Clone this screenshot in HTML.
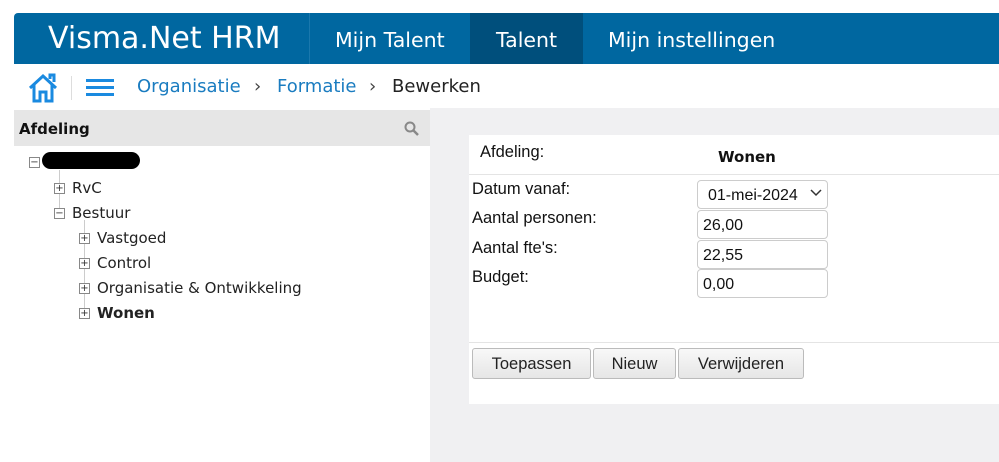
<!DOCTYPE html>
<html><head><style>
body{margin:0;width:999px;height:462px;background:#fff;font-family:"DejaVu Sans","Liberation Sans",sans-serif;position:relative;overflow:hidden}
.a{position:absolute}
.hdr{left:14px;top:13px;width:985px;height:51px;background:#0067a0;border-top-left-radius:4px}
.t{color:#fff;font-size:20.5px;top:28px}
.bc{font-size:18px;top:76px;color:#1a7cc0}
.tree{font-size:15px;color:#222}
.box{width:9px;height:9px;border:1px solid #888;background:#fff;font-size:10px;line-height:9px;text-align:center;color:#333}
.lbl{font-family:"Liberation Sans",sans-serif;font-size:16.5px;color:#111}
.inp{border:1px solid #ccc;border-radius:4px;width:131px;height:29px;background:#fff;font-family:"Liberation Sans",sans-serif;font-size:16px;line-height:29px;padding-left:5px;box-sizing:border-box;color:#111}
.btn{top:348px;height:31px;border:1px solid #bbb;border-radius:3px;background:linear-gradient(#f8f8f8,#e6e6e6);font-family:"Liberation Sans",sans-serif;font-size:16.5px;line-height:31px;text-align:center;color:#222;box-sizing:border-box}
</style></head><body>
<div class="a hdr"></div>
<div class="a" style="left:309px;top:13px;width:1px;height:51px;background:#1a78ad"></div>
<div class="a" style="left:470px;top:13px;width:113px;height:51px;background:#004f7c"></div>
<div class="a t" style="left:48px;top:21px;font-size:30px">Visma.Net HRM</div>
<div class="a t" style="left:335px">Mijn Talent</div>
<div class="a t" style="left:496px">Talent</div>
<div class="a t" style="left:608px">Mijn instellingen</div>
<svg class="a" style="left:27px;top:72px" width="34" height="32" viewBox="0 0 34 32"><path d="M3 16 L16 4 L29 16 M7 13 V29 H13 V20 H19 V29 H25 V13 M23 7 V3 H27 V10" fill="none" stroke="#1a8ae0" stroke-width="3"/></svg>
<div class="a" style="left:71px;top:76px;width:1px;height:24px;background:#ddd"></div>
<div class="a" style="left:86px;top:79px;width:28px;height:3px;background:#1a8ae0;box-shadow:0 7px 0 #1a8ae0,0 14px 0 #1a8ae0"></div>
<div class="a bc" style="left:137px">Organisatie</div>
<div class="a bc" style="left:254px;color:#444">›</div>
<div class="a bc" style="left:277px">Formatie</div>
<div class="a bc" style="left:369px;color:#444">›</div>
<div class="a bc" style="left:392px;color:#222">Bewerken</div>
<div class="a" style="left:430px;top:108px;width:569px;height:354px;background:#f0f0f2"></div>
<div class="a" style="left:14px;top:110px;width:416px;height:36px;background:#e6e6e6"></div>
<div class="a" style="left:19px;top:120px;font-weight:bold;font-size:15px;color:#111">Afdeling</div>
<svg class="a" style="left:404px;top:121px" width="16" height="16"><circle cx="6" cy="6" r="4.5" fill="none" stroke="#888" stroke-width="2"/><path d="M9.5 9.5 L14 14" stroke="#888" stroke-width="2.5"/></svg>
<div class="a box" style="left:29px;top:157px">−</div>
<div class="a" style="left:42px;top:152px;width:98px;height:17px;background:#000;border-radius:9px"></div>
<div class="a" style="left:59px;top:170px;width:1px;height:42px;background:#ccc"></div>
<div class="a" style="left:84px;top:220px;width:1px;height:92px;background:#ccc"></div>
<div class="a box" style="left:54px;top:183px">+</div><div class="a tree" style="left:72px;top:179px">RvC</div>
<div class="a box" style="left:54px;top:208px">−</div><div class="a tree" style="left:72px;top:204px">Bestuur</div>
<div class="a box" style="left:79px;top:233px">+</div><div class="a tree" style="left:97px;top:229px">Vastgoed</div>
<div class="a box" style="left:79px;top:258px">+</div><div class="a tree" style="left:97px;top:254px">Control</div>
<div class="a box" style="left:79px;top:283px">+</div><div class="a tree" style="left:97px;top:279px">Organisatie &amp; Ontwikkeling</div>
<div class="a box" style="left:79px;top:308px">+</div><div class="a tree" style="left:97px;top:304px;font-weight:bold">Wonen</div>
<div class="a" style="left:469px;top:135px;width:530px;height:269px;background:#fff"></div>
<div class="a" style="left:469px;top:174px;width:530px;height:1px;background:#e4e4e4"></div>
<div class="a" style="left:469px;top:342px;width:530px;height:1px;background:#e4e4e4"></div>
<div class="a lbl" style="left:480px;top:143px">Afdeling:</div>
<div class="a" style="left:718px;top:148px;font-weight:bold;font-size:15px;color:#111">Wonen</div>
<div class="a lbl" style="left:472px;top:180px">Datum vanaf:</div>
<div class="a lbl" style="left:472px;top:209px">Aantal personen:</div>
<div class="a lbl" style="left:472px;top:239px">Aantal fte's:</div>
<div class="a lbl" style="left:472px;top:268px">Budget:</div>
<div class="a inp" style="left:697px;top:180px;padding-left:10px">01-mei-2024</div>
<svg class="a" style="left:810px;top:189px" width="12" height="8"><path d="M1 1 L6 6 L11 1" fill="none" stroke="#333" stroke-width="1.5"/></svg>
<div class="a inp" style="left:697px;top:210px">26,00</div>
<div class="a inp" style="left:697px;top:240px">22,55</div>
<div class="a inp" style="left:697px;top:269px">0,00</div>
<div class="a btn" style="left:472px;width:119px">Toepassen</div>
<div class="a btn" style="left:593px;width:83px">Nieuw</div>
<div class="a btn" style="left:678px;width:126px">Verwijderen</div>
</body></html>
